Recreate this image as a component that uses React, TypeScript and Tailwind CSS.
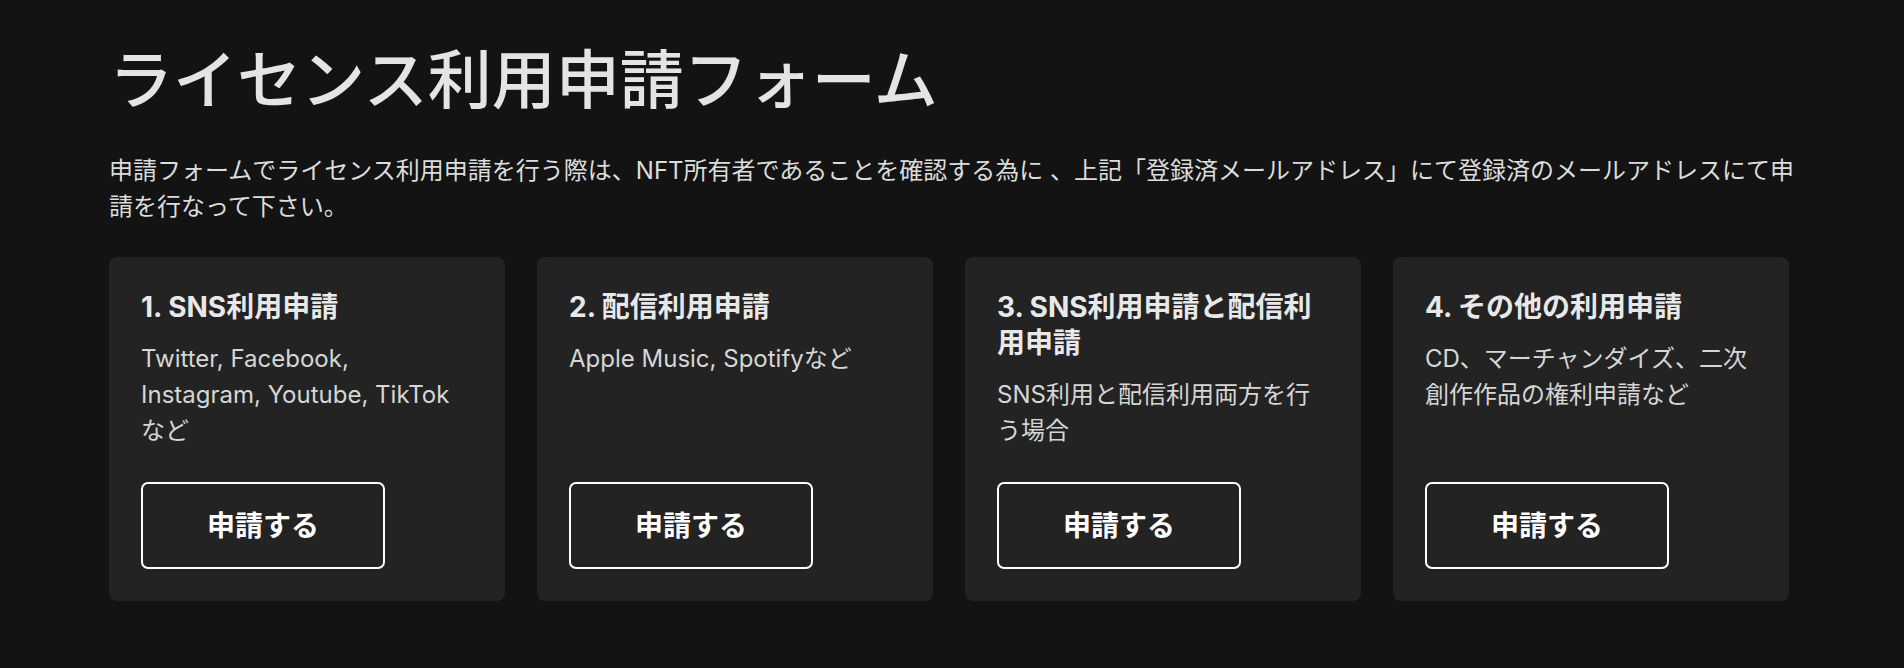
const CARDS = [
  {
    title: "1. SNS利用申請",
    body: "Twitter, Facebook, Instagram, Youtube, TikTok など",
  },
  {
    title: "2. 配信利用申請",
    body: "Apple Music, Spotifyなど",
  },
  {
    title: "3. SNS利用申請と配信利用申請",
    body: "SNS利用と配信利用両方を行う場合",
  },
  {
    title: "4. その他の利用申請",
    body: "CD、マーチャンダイズ、二次創作作品の権利申請など",
  },
];

export default function App() {
  return (
    <div
      className="min-h-[668px] bg-[#131313] text-[#e4e4e4] pl-[109px] pr-[115px] pt-[32px] pb-[66px]"
      style={{ fontFamily: 'Inter, "Noto Sans CJK JP", sans-serif' }}
    >
      <h1 className="text-[64px] leading-[96px] font-medium text-[#e4e4e4]">
        ライセンス利用申請フォーム
      </h1>

      {/* the original text wraps just after 「申」 on line one */}
      <p className="mt-[25px] mr-[-24px] text-[24px] leading-[36px] text-[#dcdcdc]">
        申請フォームでライセンス利用申請を行う際は、NFT所有者であることを確認する為に
        、上記「登録済メールアドレス」にて登録済のメールアドレスにて申請を行なって下さい。
      </p>

      <div className="mt-[32px] grid grid-cols-4 gap-[32px]">
        {CARDS.map((c) => (
          <div
            key={c.title}
            className="flex flex-col rounded-[8px] bg-[#232323] p-[32px]"
          >
            <h2 className="text-[28px] leading-[36px] font-bold text-[#e8e8e8]">
              {c.title}
            </h2>
            <p className="mt-[16px] text-[24px] leading-[36px] text-[#d6d6d6]">
              {c.body}
            </p>
            <div className="mt-auto pt-[33px]">
              <button className="flex h-[87px] w-[244px] items-center justify-center rounded-[7px] border-2 border-white text-[28px] font-bold text-white">
                申請する
              </button>
            </div>
          </div>
        ))}
      </div>
    </div>
  );
}
